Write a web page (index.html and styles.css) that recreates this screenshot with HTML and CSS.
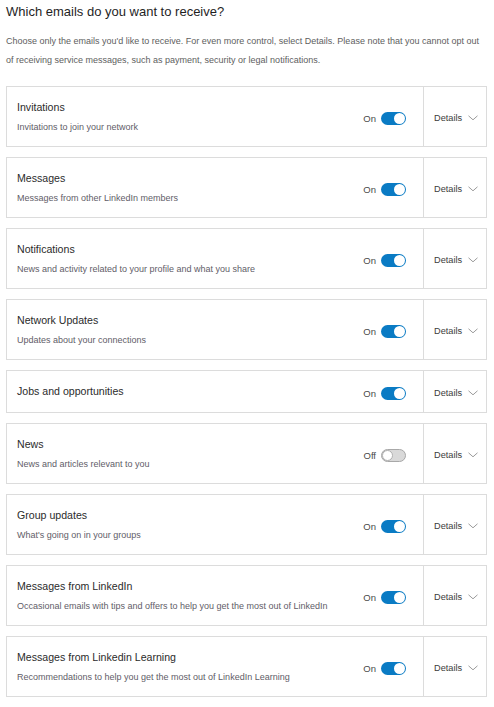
FILE: index.html
```html
<!DOCTYPE html>
<html>
<head>
<meta charset="utf-8">
<link rel="stylesheet" href="styles.css">
</head>
<body>
<div class="page">
  <h1 class="heading">Which emails do you want to receive?</h1>
  <p class="intro">Choose only the emails you'd like to receive. For even more control, select Details. Please note that you cannot opt out of receiving service messages, such as payment, security or legal notifications.</p>
  <div class="list">
    <div class="card">
      <div class="info"><div class="title">Invitations</div><div class="desc">Invitations to join your network</div></div>
      <div class="switch-area"><span class="state">On</span><span class="toggle on"><span class="knob"></span></span></div>
      <div class="details">Details <svg class="chev" viewBox="0 0 10 6"><path d="M0.5 0.8 L5 4.8 L9.5 0.8"/></svg></div>
    </div>
    <div class="card">
      <div class="info"><div class="title">Messages</div><div class="desc">Messages from other LinkedIn members</div></div>
      <div class="switch-area"><span class="state">On</span><span class="toggle on"><span class="knob"></span></span></div>
      <div class="details">Details <svg class="chev" viewBox="0 0 10 6"><path d="M0.5 0.8 L5 4.8 L9.5 0.8"/></svg></div>
    </div>
    <div class="card">
      <div class="info"><div class="title">Notifications</div><div class="desc">News and activity related to your profile and what you share</div></div>
      <div class="switch-area"><span class="state">On</span><span class="toggle on"><span class="knob"></span></span></div>
      <div class="details">Details <svg class="chev" viewBox="0 0 10 6"><path d="M0.5 0.8 L5 4.8 L9.5 0.8"/></svg></div>
    </div>
    <div class="card">
      <div class="info"><div class="title">Network Updates</div><div class="desc">Updates about your connections</div></div>
      <div class="switch-area"><span class="state">On</span><span class="toggle on"><span class="knob"></span></span></div>
      <div class="details">Details <svg class="chev" viewBox="0 0 10 6"><path d="M0.5 0.8 L5 4.8 L9.5 0.8"/></svg></div>
    </div>
    <div class="card">
      <div class="info"><div class="title">Jobs and opportunities</div></div>
      <div class="switch-area"><span class="state">On</span><span class="toggle on"><span class="knob"></span></span></div>
      <div class="details">Details <svg class="chev" viewBox="0 0 10 6"><path d="M0.5 0.8 L5 4.8 L9.5 0.8"/></svg></div>
    </div>
    <div class="card">
      <div class="info"><div class="title">News</div><div class="desc">News and articles relevant to you</div></div>
      <div class="switch-area"><span class="state">Off</span><span class="toggle off"><span class="knob"></span></span></div>
      <div class="details">Details <svg class="chev" viewBox="0 0 10 6"><path d="M0.5 0.8 L5 4.8 L9.5 0.8"/></svg></div>
    </div>
    <div class="card">
      <div class="info"><div class="title">Group updates</div><div class="desc">What's going on in your groups</div></div>
      <div class="switch-area"><span class="state">On</span><span class="toggle on"><span class="knob"></span></span></div>
      <div class="details">Details <svg class="chev" viewBox="0 0 10 6"><path d="M0.5 0.8 L5 4.8 L9.5 0.8"/></svg></div>
    </div>
    <div class="card">
      <div class="info"><div class="title">Messages from LinkedIn</div><div class="desc">Occasional emails with tips and offers to help you get the most out of LinkedIn</div></div>
      <div class="switch-area"><span class="state">On</span><span class="toggle on"><span class="knob"></span></span></div>
      <div class="details">Details <svg class="chev" viewBox="0 0 10 6"><path d="M0.5 0.8 L5 4.8 L9.5 0.8"/></svg></div>
    </div>
    <div class="card">
      <div class="info"><div class="title">Messages from Linkedin Learning</div><div class="desc">Recommendations to help you get the most out of LinkedIn Learning</div></div>
      <div class="switch-area"><span class="state">On</span><span class="toggle on"><span class="knob"></span></span></div>
      <div class="details">Details <svg class="chev" viewBox="0 0 10 6"><path d="M0.5 0.8 L5 4.8 L9.5 0.8"/></svg></div>
    </div>
  </div>
</div>
</body>
</html>
```
FILE: styles.css
```css
html, body {
  margin: 0;
  padding: 0;
  background: #ffffff;
}
body {
  font-family: "Liberation Sans", Arial, sans-serif;
  color: #333333;
}
.page {
  padding: 4px 7px 0 6px;
}
.heading {
  margin: 0;
  font-size: 13px;
  line-height: 16px;
  font-weight: normal;
  color: #1f1f1f;
}
.intro {
  margin: 12px 8px 16px 0;
  font-size: 9px;
  line-height: 19px;
  color: #5e5e5e;
}
.list {
  display: flex;
  flex-direction: column;
  gap: 10px;
}
.card {
  display: flex;
  align-items: stretch;
  border: 1px solid #dcdcdc;
}
.info {
  flex: 1;
  padding: 13px 0 13px 10px;
}
.title {
  font-size: 10.6px;
  line-height: 14px;
  color: #2b2b2b;
}
.title:only-child {
  padding-bottom: 1px;
}
.desc {
  margin-top: 7px;
  font-size: 9px;
  line-height: 12px;
  color: #5f5d68;
}
.switch-area {
  display: flex;
  align-items: center;
  gap: 5px;
  padding: 4px 17px 0 0;
}
.state {
  font-size: 9.5px;
  color: #4a4a4a;
}
.toggle {
  position: relative;
  display: inline-block;
  width: 25px;
  height: 13px;
  border-radius: 7px;
  box-sizing: border-box;
}
.toggle.on {
  background: #0a7bc4;
}
.toggle.off {
  background: #d9d9d9;
  border: 1px solid #a8a8a8;
}
.knob {
  position: absolute;
  top: 1px;
  width: 11px;
  height: 11px;
  border-radius: 50%;
  background: #ffffff;
  box-sizing: border-box;
}
.toggle.on .knob {
  right: 1px;
}
.toggle.off .knob {
  top: 0;
  left: 0;
  border: 1px solid #b0b0b0;
}
.details {
  width: 63px;
  box-sizing: border-box;
  border-left: 1px solid #dcdcdc;
  padding: 2px 0 0 10px;
  display: flex;
  align-items: center;
  gap: 6px;
  font-size: 9.2px;
  color: #3c3c3c;
}
.chev {
  width: 10px;
  height: 6px;
  fill: none;
  stroke: #8f8f8f;
  stroke-width: 0.9;
}
```
